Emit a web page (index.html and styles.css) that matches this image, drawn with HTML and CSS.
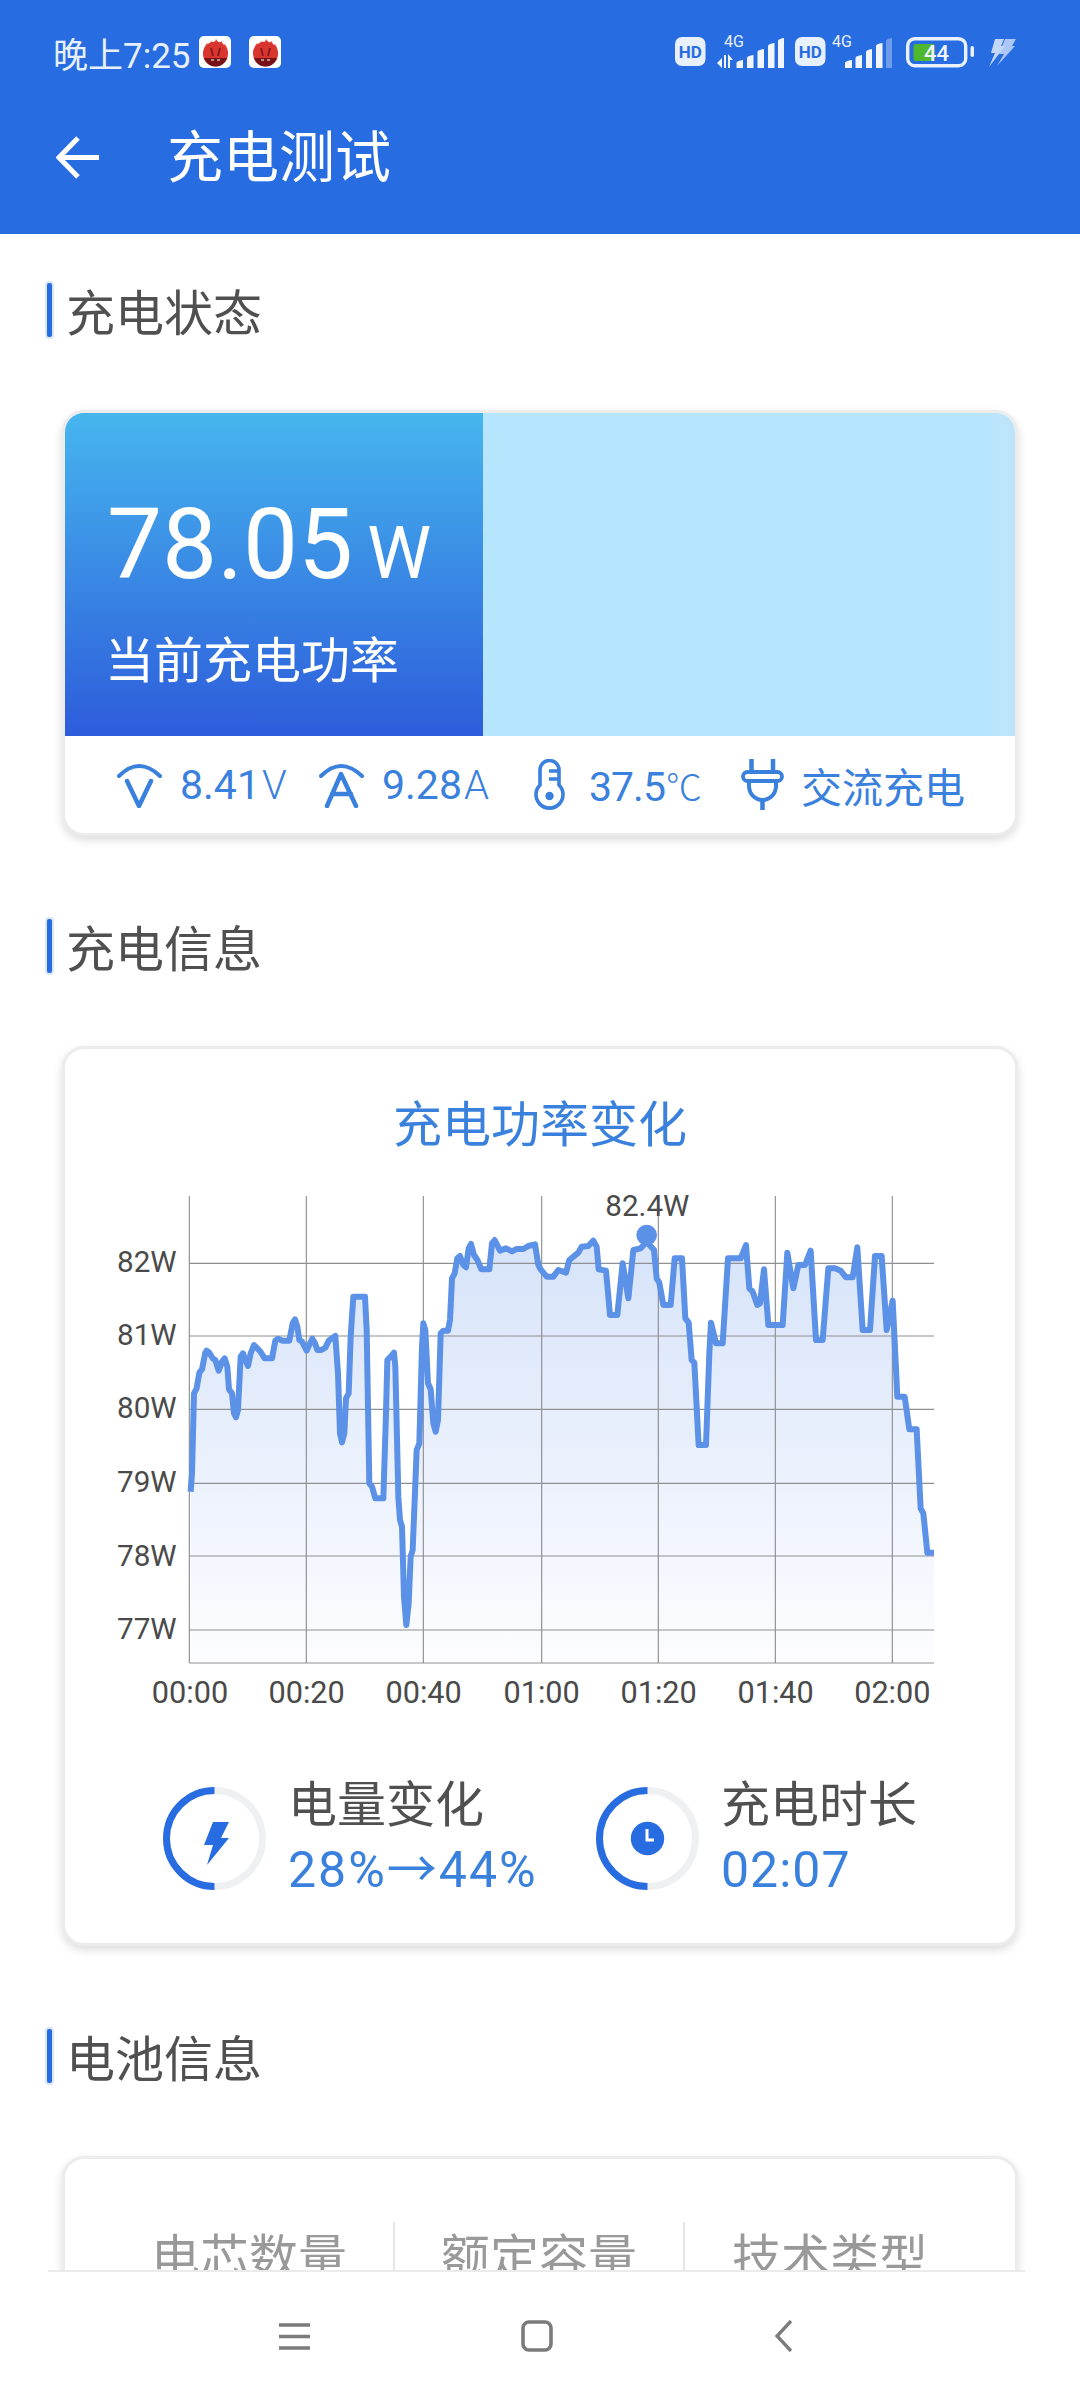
FILE: index.html
```html
<!DOCTYPE html>
<html lang="zh-CN">
<head>
    <meta charset="UTF-8"/>
    <title>充电测试</title>
    <link rel="stylesheet" href="styles.css">
</head>
<body>
<div class="page">
    <header class="app-head">
        <div class="status-bar">
            <div class="status-left">
                <span class="status-time">晚上7:25</span>
                <svg class="app-badge" viewBox="0 0 32 32">
                    <rect width="32" height="32" rx="5" fill="#fff"/>
                    <path d="M4 18 C4 13 6 10 8 7 L10 10 L12 5 L15 8 L17 3 L20 7 L23 5 L24 10 L26 8 C28 11 29 14 29 18 Z" fill="#ea5148"/>
                    <circle cx="16.500" cy="18" r="12.500" fill="#d9352f"/>
                    <path d="M5 22 H28 C26 27 22 30.500 16.500 30.500 C11 30.500 7 27 5 22 Z" fill="#761216"/>
                    <path d="M12 12 L14 20 M21 12 L19 20" stroke="#8c1a1c" stroke-width="2"/>
                    <path d="M12 24 H15 M18 24 H21" stroke="#fff" stroke-width="1"/>
                </svg>
                <svg class="app-badge" viewBox="0 0 32 32">
                    <rect width="32" height="32" rx="5" fill="#fff"/>
                    <path d="M4 18 C4 13 6 10 8 7 L10 10 L12 5 L15 8 L17 3 L20 7 L23 5 L24 10 L26 8 C28 11 29 14 29 18 Z" fill="#ea5148"/>
                    <circle cx="16.500" cy="18" r="12.500" fill="#d9352f"/>
                    <path d="M5 22 H28 C26 27 22 30.500 16.500 30.500 C11 30.500 7 27 5 22 Z" fill="#761216"/>
                    <path d="M12 12 L14 20 M21 12 L19 20" stroke="#8c1a1c" stroke-width="2"/>
                    <path d="M12 24 H15 M18 24 H21" stroke="#fff" stroke-width="1"/>
                </svg>
            </div>
            <div class="status-right">
                <svg class="st-hd" viewBox="0 0 31 34">
                    <rect y="2" width="30.500" height="29" rx="7" fill="#e8f0fd"/>
                    <text x="15.300" y="22.500" class="hd-text">HD</text>
                </svg>
                <svg class="st-sig1" viewBox="0 0 67 34">
                    <text x="7" y="12" class="sig-text">4G</text>
                    <path d="M0 28 L5 23 V33 Z M7 20 H9 V33 H7 Z M11 19 L16 25 L13 25 V33 H11 Z" fill="#f0f5fe"/>
                    <path d="M19.500 33 V28 Q19.500 26 26 25 V33 Z M30 33 V23 Q30 21 36.500 20 V33 Z M40.500 33 V17 Q40.500 15 47 14 V33 Z M51 33 V11 Q51 9 57.500 8 V33 Z M61 33 V6 Q61 4 67 3 V33 Z" fill="#f0f5fe"/>
                </svg>
                <svg class="st-hd" viewBox="0 0 31 34">
                    <rect y="2" width="30.500" height="29" rx="7" fill="#e8f0fd"/>
                    <text x="15.300" y="22.500" class="hd-text">HD</text>
                </svg>
                <svg class="st-sig2" viewBox="0 0 60 34">
                    <text x="0" y="12" class="sig-text">4G</text>
                    <path d="M13 33 V28 Q13 26 20 25 V33 Z M23.500 33 V23 Q23.500 21 30 20 V33 Z M34 33 V17 Q34 15 40 14 V33 Z M44 33 V11 Q44 9 50.500 8 V33 Z" fill="#f0f5fe"/>
                    <path d="M54 33 V6 Q54 4 60 3 V33 Z" fill="#f0f5fe" opacity=".35"/>
                </svg>
                <svg class="st-batt" viewBox="0 0 69 34">
                    <rect x="1.700" y="3.700" width="58" height="27" rx="7" fill="none" stroke="#eaf1fd" stroke-width="3.400"/>
                    <rect x="7.500" y="9" width="21" height="17" rx="2" fill="#4fb82e"/>
                    <rect x="64.500" y="11" width="3.500" height="11" rx="1.700" fill="#eaf1fd"/>
                    <text x="30.500" y="26" class="batt-text">44</text>
                </svg>
                <svg class="st-bolt" viewBox="0 0 27 34">
                    <path d="M6 4 H15 L12 11 H16 L0 32 L6 18 H2 Z" fill="#c3d7f8"/>
                    <path d="M16 4 H27 L23 11 H26 L8 31 L15 19 H10 Z" fill="#c3d7f8" opacity=".85"/>
                </svg>
            </div>
        </div>
        <div class="title-bar">
            <svg class="back-icon" viewBox="0 0 43 43">
                <path d="M43 21.500 H4 M22 2 L3 21.500 L22 41" fill="none" stroke="#fff" stroke-width="5"/>
            </svg>
            <h1 class="page-title">充电测试</h1>
        </div>
    </header>

    <main class="content">
        <h2 class="sec-title"><i class="sec-mark"></i>充电状态</h2>
        <section class="card">
            <div class="power-track">
                <div class="power-fill">
                    <div class="power-num">78.05<span class="power-unit">W</span></div>
                    <div class="power-label">当前充电功率</div>
                </div>
            </div>
            <div class="stat-row">
                <div class="stat-item">
                    <svg class="ico-va" viewBox="0 0 45 46">
                        <path d="M2 14 Q22 -6 43 14" fill="none" stroke="#3a80dd" stroke-width="4" stroke-linecap="round"/>
                        <path d="M10 19 L22 44 L34 19" fill="none" stroke="#3a80dd" stroke-width="4.500" stroke-linecap="round" stroke-linejoin="round"/>
                    </svg>
                    <span class="stat-val">8.41<small>V</small></span>
                </div>
                <div class="stat-item">
                    <svg class="ico-va" viewBox="0 0 45 46">
                        <path d="M2 14 Q22 -6 43 14" fill="none" stroke="#3a80dd" stroke-width="4" stroke-linecap="round"/>
                        <path d="M8 44 L22 12 L37 44 M13 32 H32" fill="none" stroke="#3a80dd" stroke-width="4.500" stroke-linecap="round" stroke-linejoin="round"/>
                    </svg>
                    <span class="stat-val">9.28<small>A</small></span>
                </div>
                <div class="stat-item">
                    <svg class="ico-temp" viewBox="0 0 31 52">
                        <path d="M6 26 V11 a9.500 9.500 0 0 1 19 0 V26 a13.500 13.500 0 1 1 -19 0 Z" fill="none" stroke="#3a80dd" stroke-width="3.600"/>
                        <path d="M15 12 H25 M15 20 H25" stroke="#3a80dd" stroke-width="3.600"/>
                        <circle cx="15.500" cy="37" r="4.200" fill="#3a80dd"/>
                    </svg>
                    <span class="stat-val stat-temp">37.5<small>℃</small></span>
                </div>
                <div class="stat-item">
                    <svg class="ico-plug" viewBox="0 0 43 51">
                        <path d="M10.500 0 V13 M32 0 V13 M21.500 41 V51" stroke="#3a80dd" stroke-width="4.500" fill="none"/>
                        <rect x="2" y="13" width="39" height="9" rx="4.500" fill="none" stroke="#3a80dd" stroke-width="3.800"/>
                        <path d="M8 22 V27 a13.500 14 0 0 0 27 0 V22" fill="none" stroke="#3a80dd" stroke-width="4"/>
                    </svg>
                    <span class="stat-val stat-cn">交流充电</span>
                </div>
            </div>
        </section>

        <h2 class="sec-title"><i class="sec-mark"></i>充电信息</h2>
        <section class="card">
            <h3 class="chart-title">充电功率变化</h3>
            <svg class="chart" viewBox="0 0 2520 1590">
                <defs>
                    <linearGradient id="areaFill" gradientUnits="userSpaceOnUse" x1="0" y1="180" x2="0" y2="1449">
                        <stop offset="0" stop-color="#d6e3f9"/>
                        <stop offset="1" stop-color="#fdfdff"/>
                    </linearGradient>
                </defs>
                <polygon fill="url(#areaFill)" points="272,1449 272,935 276,880 282,640 290,625 298,578 306,568 316,518 320,512 328,518 338,535 346,540 356,572 366,545 374,535 382,560 387,628 396,640 402,700 408,712 414,690 422,530 429,520 436,540 444,558 452,520 462,495 472,505 482,516 494,535 516,535 526,482 534,476 548,482 568,482 578,430 585,418 592,440 598,480 606,485 620,512 630,490 637,476 645,490 652,510 664,510 676,503 686,482 706,468 714,580 720,760 726,787 733,760 738,655 746,640 752,470 760,350 795,350 800,450 808,910 816,920 826,955 850,955 858,700 862,540 872,530 882,518 886,560 895,950 900,1020 906,1040 912,1250 919,1335 926,1270 932,1130 938,1110 950,810 958,790 966,500 970,430 976,450 984,610 992,628 1000,730 1007,755 1014,720 1022,460 1030,452 1044,452 1050,420 1056,295 1064,280 1072,235 1080,228 1090,255 1098,262 1106,205 1113,192 1122,225 1132,240 1144,268 1168,268 1176,190 1184,180 1194,200 1200,212 1218,205 1236,214 1250,207 1270,207 1285,198 1305,193 1315,255 1322,268 1340,290 1360,290 1375,270 1398,278 1408,240 1435,218 1445,200 1465,198 1480,182 1490,200 1496,268 1518,272 1530,405 1552,405 1568,250 1585,355 1600,210 1622,205 1640,185 1662,210 1670,295 1678,308 1690,375 1712,375 1724,235 1746,235 1756,415 1766,428 1775,540 1783,548 1796,795 1818,795 1828,520 1833,428 1848,490 1868,490 1884,235 1922,235 1938,195 1948,325 1958,335 1972,375 1980,370 1992,268 2005,435 2048,435 2062,218 2080,325 2095,255 2115,255 2132,212 2148,480 2168,480 2185,265 2205,265 2222,272 2238,292 2258,292 2272,202 2288,450 2310,450 2325,228 2345,228 2360,450 2378,362 2392,650 2414,650 2428,748 2450,748 2462,985 2470,1000 2482,1118 2502,1118 2502,1449"/>
                <path class="grid-line" d="M268 48 V1449 M619 48 V1449 M970 48 V1449 M1325 48 V1449 M1675 48 V1449 M2026 48 V1449 M2377 48 V1449 M268 250 H2502 M268 468 H2502 M268 688 H2502 M268 910 H2502 M268 1128 H2502 M268 1350 H2502 M268 1449 H2502"/>
                <polyline class="power-line" points="272,935 276,880 282,640 290,625 298,578 306,568 316,518 320,512 328,518 338,535 346,540 356,572 366,545 374,535 382,560 387,628 396,640 402,700 408,712 414,690 422,530 429,520 436,540 444,558 452,520 462,495 472,505 482,516 494,535 516,535 526,482 534,476 548,482 568,482 578,430 585,418 592,440 598,480 606,485 620,512 630,490 637,476 645,490 652,510 664,510 676,503 686,482 706,468 714,580 720,760 726,787 733,760 738,655 746,640 752,470 760,350 795,350 800,450 808,910 816,920 826,955 850,955 858,700 862,540 872,530 882,518 886,560 895,950 900,1020 906,1040 912,1250 919,1335 926,1270 932,1130 938,1110 950,810 958,790 966,500 970,430 976,450 984,610 992,628 1000,730 1007,755 1014,720 1022,460 1030,452 1044,452 1050,420 1056,295 1064,280 1072,235 1080,228 1090,255 1098,262 1106,205 1113,192 1122,225 1132,240 1144,268 1168,268 1176,190 1184,180 1194,200 1200,212 1218,205 1236,214 1250,207 1270,207 1285,198 1305,193 1315,255 1322,268 1340,290 1360,290 1375,270 1398,278 1408,240 1435,218 1445,200 1465,198 1480,182 1490,200 1496,268 1518,272 1530,405 1552,405 1568,250 1585,355 1600,210 1622,205 1640,185 1662,210 1670,295 1678,308 1690,375 1712,375 1724,235 1746,235 1756,415 1766,428 1775,540 1783,548 1796,795 1818,795 1828,520 1833,428 1848,490 1868,490 1884,235 1922,235 1938,195 1948,325 1958,335 1972,375 1980,370 1992,268 2005,435 2048,435 2062,218 2080,325 2095,255 2115,255 2132,212 2148,480 2168,480 2185,265 2205,265 2222,272 2238,292 2258,292 2272,202 2288,450 2310,450 2325,228 2345,228 2360,450 2378,362 2392,650 2414,650 2428,748 2450,748 2462,985 2470,1000 2482,1118 2502,1118"/>
                <circle cx="1640" cy="165" r="31" fill="#5c91e8"/>
                <text class="axis-text" x="1642" y="108" text-anchor="middle">82.4W</text>
                <g class="axis-y">
                    <text class="axis-text" x="230" y="275">82W</text>
                    <text class="axis-text" x="230" y="495">81W</text>
                    <text class="axis-text" x="230" y="715">80W</text>
                    <text class="axis-text" x="230" y="937">79W</text>
                    <text class="axis-text" x="230" y="1157">78W</text>
                    <text class="axis-text" x="230" y="1377">77W</text>
                </g>
                <g class="axis-x">
                    <text class="axis-time" x="270" y="1568">00:00</text>
                    <text class="axis-time" x="620" y="1568">00:20</text>
                    <text class="axis-time" x="971" y="1568">00:40</text>
                    <text class="axis-time" x="1325" y="1568">01:00</text>
                    <text class="axis-time" x="1676" y="1568">01:20</text>
                    <text class="axis-time" x="2027" y="1568">01:40</text>
                    <text class="axis-time" x="2377" y="1568">02:00</text>
                </g>
            </svg>
            <div class="summary">
                <div class="sum-item">
                    <svg class="ring" viewBox="0 0 103 103">
                        <path d="M51.500 3.500 A48 48 0 0 1 51.500 99.500" fill="none" stroke="#eef0f2" stroke-width="7"/>
                        <path d="M51.500 3.500 A48 48 0 0 0 51.500 99.500" fill="none" stroke="#276ce0" stroke-width="7"/>
                        <path d="M50 35 H66 L58 51 H66 L44 78 L50 58 H41 Z" fill="#276ce0"/>
                    </svg>
                    <div>
                        <div class="sum-name">电量变化</div>
                        <div class="sum-val sum-wide">28%→44%</div>
                    </div>
                </div>
                <div class="sum-item">
                    <svg class="ring" viewBox="0 0 103 103">
                        <path d="M51.500 3.500 A48 48 0 0 1 51.500 99.500" fill="none" stroke="#eef0f2" stroke-width="7"/>
                        <path d="M51.500 3.500 A48 48 0 0 0 51.500 99.500" fill="none" stroke="#276ce0" stroke-width="7"/>
                        <circle cx="51.500" cy="51.500" r="16.700" fill="#276ce0"/>
                        <path d="M51 42 V53 H58" fill="none" stroke="#fff" stroke-width="3"/>
                    </svg>
                    <div>
                        <div class="sum-name">充电时长</div>
                        <div class="sum-val">02:07</div>
                    </div>
                </div>
            </div>
        </section>

        <h2 class="sec-title"><i class="sec-mark"></i>电池信息</h2>
        <section class="card">
            <div class="batt-grid">
                <div class="batt-cell">电芯数量</div>
                <div class="batt-cell">额定容量</div>
                <div class="batt-cell">技术类型</div>
            </div>
        </section>
    </main>

    <nav class="nav-bar">
        <svg class="nav-menu" viewBox="0 0 31 27">
            <path d="M0 2 H31 M0 13.500 H31 M0 25 H31" stroke="#7b7b7b" stroke-width="3.600"/>
        </svg>
        <svg class="nav-home" viewBox="0 0 32 32">
            <rect x="2" y="2" width="28" height="28" rx="6" fill="none" stroke="#7b7b7b" stroke-width="3.600"/>
        </svg>
        <svg class="nav-back" viewBox="0 0 17 32">
            <path d="M16 1 L2 16 L16 31" fill="none" stroke="#7b7b7b" stroke-width="3.400"/>
        </svg>
    </nav>
</div>
</body>
</html>
```

FILE: styles.css
```css
* {box-sizing: border-box;}
html, body {margin: 0; padding: 0; background: #fff;}
body {font-family: Roboto, "Noto Sans CJK SC", sans-serif; color: #505050;}
h1, h2, h3 {margin: 0; font-weight: 400;}

.page {width: 1080px; height: 2400px; display: flex; flex-direction: column; overflow: hidden;}

/* top blue area */
.app-head {height: 234px; flex: none; background: #276ce0; color: #fff;}
.status-bar {height: 80px; padding: 24px 64px 0 53px; display: flex; justify-content: space-between;}
.status-left {display: flex; align-items: center; height: 56px;}
.status-time {font-size: 35px; color: #e8f0fd; width: 146px; white-space: nowrap;}
.app-badge {width: 32px; height: 32px; margin-right: 18px;}
.status-right {display: flex; align-items: center; height: 56px;}
.status-right svg {height: 34px; flex: none; overflow: visible;}
.st-hd {width: 31px;}
.st-sig1 {width: 67px; margin: 0 11px;}
.st-sig2 {width: 60px; margin: 0 14px 0 6px;}
.st-batt {width: 69px; margin-right: 14px;}
.st-bolt {width: 27px;}
.hd-text {font: 700 17px Roboto, sans-serif; fill: #276ce0; text-anchor: middle;}
.sig-text {font: 400 16px Roboto, sans-serif; fill: #e8f0fd;}
.batt-text {font: 500 22px Roboto, sans-serif; fill: #f0f5fe; text-anchor: middle;}

.title-bar {height: 154px; padding-left: 56px; display: flex; align-items: center;}
.back-icon {width: 43px; height: 43px; flex: none;}
.page-title {font-size: 56px; margin-left: 68px; line-height: 60px; padding-top: 2px;}

/* sections */
.content {flex: 1; overflow: hidden; padding-top: 46px;}
.sec-title {display: flex; align-items: center; height: 58px; padding-left: 45px; font-size: 49px; color: #505050; margin-bottom: 72px;}
.sec-mark {width: 9px; height: 58px; margin: 2px 12px 0 0; background: #276ce0; border: 2px solid #dbe6f9; border-radius: 4px;}
.card {width: 956px; margin: 0 0 80px 62px; background: #fff; border: 3px solid #ececec; border-radius: 22px; box-shadow: 0 4px 10px rgba(0, 0, 0, .14); overflow: hidden;}

/* card 1 */
.power-track {height: 323px; background: linear-gradient(to right, #b6e5fe 96%, #bfe4f9);}
.power-fill {width: 418px; height: 323px; padding: 82px 0 0 42px; color: #fff; background: linear-gradient(#46b6ee, #2d5cdb);}
.power-num {font-size: 98px; line-height: 100px; white-space: nowrap;}
.power-unit {font-size: 72px; font-weight: 400; margin-left: 14px;}
.power-label {font-size: 49px; line-height: 60px; margin: 28px 0 0 -2px;}
.stat-row {height: 97px; padding-left: 52px; display: grid; grid-template-columns: 202px 214px 208px 1fr; align-items: center;}
.stat-item {display: flex; align-items: center; color: #3a80dd; white-space: nowrap;}
.stat-val {font-size: 41px; margin-left: 18px;}
.stat-val small {font-size: 40px; font-weight: 300; margin-left: 2px;}
.stat-temp {letter-spacing: -1px;}
.stat-temp small {font-size: 36px; margin-left: 1px;}
.stat-cn {font-size: 41px; margin-left: 17px;}
.ico-va {width: 45px; height: 46px; flex: none;}
.ico-temp {width: 31px; height: 52px; flex: none; margin-left: 1px; margin-right: 6px;}
.ico-plug {width: 43px; height: 51px; flex: none;}

/* card 2 */
.chart-title {font-size: 49px; line-height: 48px; height: 131px; padding-top: 53px; text-align: center; color: #3a80dd;}
.chart {display: block; width: 840px; height: 530px; margin-left: 35px;}
.grid-line {fill: none; stroke: #8f9092; stroke-width: 3.500;}
.power-line {fill: none; stroke: #5c91e8; stroke-width: 18; stroke-linejoin: round;}
.axis-text {font-size: 89px; fill: #4a4a4a;}
.axis-time {font-size: 92px; fill: #4a4a4a;}
.axis-y {text-anchor: end;}
.axis-x {text-anchor: middle;}
.summary {margin-top: 64px; padding: 0 0 41px 98px; display: grid; grid-template-columns: 433px 1fr;}
.sum-item {display: flex; align-items: center;}
.ring {width: 103px; height: 103px; flex: none; margin-right: 22px;}
.sum-name {font-size: 49px; line-height: 64px; color: #505050;}
.sum-val {font-size: 50px; line-height: 64px; letter-spacing: 1px; color: #3a80dd; white-space: nowrap;}
.sum-wide {letter-spacing: 2px;}

/* card 3 */
.batt-grid {margin-top: 63px; padding: 0 40px; display: grid; grid-template-columns: repeat(3, 290px);}
.batt-cell {height: 100px; padding-top: 7px; font-size: 49px; line-height: 60px; color: #999; text-align: center; border-right: 2px solid #e6e6e6;}
.batt-cell:last-child {border-right: 0;}

/* bottom nav */
.nav-bar {height: 130px; flex: none; margin: 0 55px 0 48px; padding-left: 231px; display: flex; align-items: center; border-top: 2px solid #ebebeb;}
.nav-menu {width: 31px; height: 27px; flex: none;}
.nav-home {width: 32px; height: 32px; flex: none; margin-left: 211px;}
.nav-back {width: 17px; height: 32px; flex: none; margin-left: 222px;}
```
